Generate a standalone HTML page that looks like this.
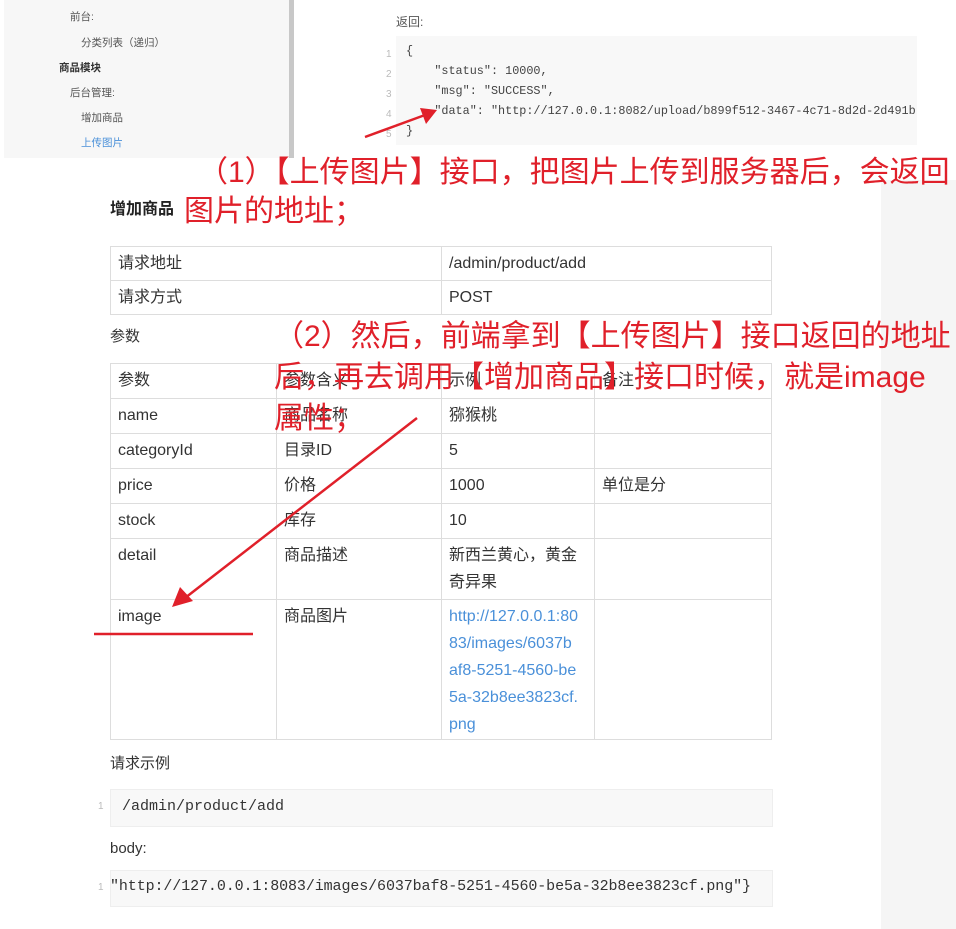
<!DOCTYPE html>
<html><head><meta charset="utf-8"><style>
*{margin:0;padding:0;box-sizing:border-box}
body{width:956px;height:929px;background:#fff;position:relative;overflow:hidden;font-family:"Liberation Sans","Noto Sans CJK SC",sans-serif;color:#333}
.a{position:absolute;white-space:nowrap}
.side{position:absolute;left:4px;top:0;width:286px;height:158px;background:#f7f7f7}
.sb{position:absolute;left:289px;top:0;width:5px;height:158px;background:#c8c8c8}
.sf{font-size:10.5px;color:#555}
.mono{font-family:"Liberation Mono",monospace}
.red{color:#e0202a;font-size:30px;font-family:"Liberation Sans","Noto Sans CJK SC",sans-serif}
table{position:absolute;border-collapse:collapse;font-size:16px;color:#333;table-layout:fixed}
td{border:1px solid #ddd;padding:0 7px;vertical-align:top;line-height:27px}
.code{position:absolute;background:#f8f8f8;border:1px solid #eee}
.ln{color:#bbb;font-size:10px}
</style></head><body>
<div class="side"></div><div class="sb"></div>
<div class="a sf" style="left:70px;top:9px">前台:</div>
<div class="a sf" style="left:81px;top:35px">分类列表（递归）</div>
<div class="a sf" style="left:59px;top:60px;font-weight:bold;color:#333">商品模块</div>
<div class="a sf" style="left:70px;top:85px">后台管理:</div>
<div class="a sf" style="left:81px;top:110px">增加商品</div>
<div class="a sf" style="left:81px;top:135px;color:#4a90d9">上传图片</div>

<div class="a sf" style="left:396px;top:13px;font-size:12px">返回:</div>
<div class="code" style="left:396px;top:36px;width:521px;height:109px;border:none;background:#f8f8f8"></div>
<div class="a ln" style="left:386px;top:45px;line-height:20px">1<br>2<br>3<br>4<br>5</div>
<div class="a mono" style="left:406px;top:41px;font-size:11.8px;line-height:20px;color:#444">{<br>&nbsp;&nbsp;&nbsp;&nbsp;"status": 10000,<br>&nbsp;&nbsp;&nbsp;&nbsp;"msg": "SUCCESS",<br>&nbsp;&nbsp;&nbsp;&nbsp;"data": "http://127.0.0.1:8082/upload/b899f512-3467-4c71-8d2d-2d491b<br>}</div>

<div style="position:absolute;left:881px;top:180px;width:75px;height:749px;background:#f5f5f5"></div>

<div class="a" style="left:110px;top:195px;font-size:16px;font-weight:bold;color:#222">增加商品</div>
<div class="a red" style="left:198px;top:147px">（1）【上传图片】接口，把图片上传到服务器后，会返回</div>
<div class="a red" style="left:184px;top:186px">图片的地址；</div>

<table style="left:110px;top:246px;width:662px">
<tr style="height:34px"><td style="width:331px;line-height:33px">请求地址</td><td style="line-height:33px">/admin/product/add</td></tr>
<tr style="height:34px"><td style="line-height:33px">请求方式</td><td style="line-height:33px">POST</td></tr>
</table>
<div class="a" style="left:110px;top:325px;font-size:15px">参数</div>

<table style="left:110px;top:363px;width:662px">
<tr style="height:35px"><td style="width:166px;line-height:34px">参数</td><td style="width:165px;line-height:34px">参数含义</td><td style="width:153px;line-height:34px">示例</td><td style="line-height:34px">备注</td></tr>
<tr style="height:35px"><td style="line-height:34px">name</td><td style="line-height:34px">商品名称</td><td style="line-height:34px">猕猴桃</td><td></td></tr>
<tr style="height:34px"><td style="line-height:34px">categoryId</td><td style="line-height:34px">目录ID</td><td style="line-height:34px">5</td><td></td></tr>
<tr style="height:35px"><td style="line-height:34px">price</td><td style="line-height:34px">价格</td><td style="line-height:34px">1000</td><td style="line-height:34px">单位是分</td></tr>
<tr style="height:34px"><td style="line-height:34px">stock</td><td style="line-height:34px">库存</td><td style="line-height:34px">10</td><td></td></tr>
<tr style="height:61px"><td style="padding-top:3px">detail</td><td style="padding-top:3px">商品描述</td><td style="padding-top:3px">新西兰黄心，黄金<br>奇异果</td><td></td></tr>
<tr style="height:140px"><td style="padding-top:3px">image</td><td style="padding-top:3px">商品图片</td><td style="padding-top:3px;color:#4a90d9">http://127.0.0.1:80<br>83/images/6037b<br>af8-5251-4560-be<br>5a-32b8ee3823cf.<br>png</td><td></td></tr>
</table>

<div class="a red" style="left:274px;top:316px;line-height:41px">（2）然后，前端拿到【上传图片】接口返回的地址<br>后，再去调用【增加商品】接口时候，就是image<br>属性；</div>

<svg style="position:absolute;left:0;top:0" width="956" height="929">
<line x1="365" y1="137" x2="425" y2="115" stroke="#e0202a" stroke-width="2.5"/>
<polygon points="437,110 420,108 426,124" fill="#e0202a"/>
<line x1="417" y1="418" x2="185" y2="598" stroke="#e0202a" stroke-width="2.5"/>
<polygon points="172,607 180,587 193,601" fill="#e0202a"/>
<line x1="94" y1="634" x2="253" y2="634" stroke="#e0202a" stroke-width="2.5"/>
</svg>

<div class="a" style="left:110px;top:752px;font-size:15px">请求示例</div>
<div class="code" style="left:110px;top:789px;width:663px;height:38px"></div>
<div class="a ln" style="left:98px;top:801px">1</div>
<div class="a mono" style="left:122px;top:798px;font-size:15px;color:#333">/admin/product/add</div>
<div class="a" style="left:110px;top:840px;font-size:15px">body:</div>
<div class="code" style="left:110px;top:870px;width:663px;height:37px"></div>
<div class="a ln" style="left:98px;top:882px">1</div>
<div class="a mono" style="left:110px;top:878px;font-size:15px;color:#333;letter-spacing:-0.1px">"http://127.0.0.1:8083/images/6037baf8-5251-4560-be5a-32b8ee3823cf.png"}</div>
</body></html>
